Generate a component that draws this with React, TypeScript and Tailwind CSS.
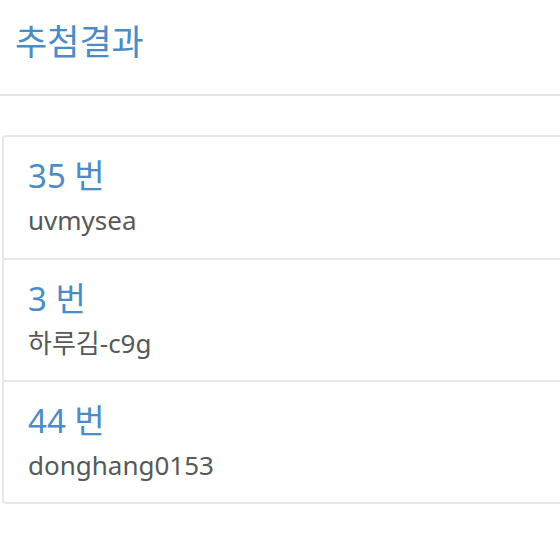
const results = [
  { no: 35, name: "uvmysea" },
  { no: 3, name: "하루김-c9g" },
  { no: 44, name: "donghang0153" },
];

export default function App() {
  return (
    <div
      className="w-[560px] h-[560px] bg-white overflow-hidden"
      style={{ fontFamily: '"Noto Sans", "Noto Sans CJK KR", sans-serif' }}
    >
      <div className="h-[94px] pl-[15px] pt-[19px]">
        <h1 className="text-[35px] leading-[46px] text-[#4a8cc5]">추첨결과</h1>
      </div>
      <div className="h-[2px] bg-[#e6e6e6]" />
      <ul className="mt-[39px] ml-[2px] -mr-4 border-2 border-[#e8e8e8] rounded-[4px]">
        {results.map((r, i) => (
          <li
            key={r.no}
            className={
              "pl-[24px] pt-[17px] " +
              (i > 0 ? "h-[122px] border-t-2 border-[#e8e8e8]" : "h-[121px]")
            }
          >
            <div className="text-[33px] leading-[44px] text-[#4a8cc5]">{r.no} 번</div>
            <div className="mt-[5px] text-[26px] leading-[34px] text-[#585858]">{r.name}</div>
          </li>
        ))}
      </ul>
    </div>
  );
}
